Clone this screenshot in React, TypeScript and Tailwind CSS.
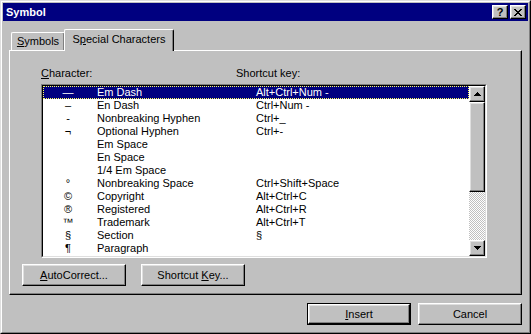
import React from "react";

const rows: [string, string, string][] = [
  ["—", "Em Dash", "Alt+Ctrl+Num -"],
  ["–", "En Dash", "Ctrl+Num -"],
  ["-", "Nonbreaking Hyphen", "Ctrl+_"],
  ["¬", "Optional Hyphen", "Ctrl+-"],
  ["", "Em Space", ""],
  ["", "En Space", ""],
  ["", "1/4 Em Space", ""],
  ["°", "Nonbreaking Space", "Ctrl+Shift+Space"],
  ["©", "Copyright", "Alt+Ctrl+C"],
  ["®", "Registered", "Alt+Ctrl+R"],
  ["™", "Trademark", "Alt+Ctrl+T"],
  ["§", "Section", "§"],
  ["¶", "Paragraph", ""],
];

const raised =
  "bg-[#c0c0c0] border border-t-white border-l-white border-r-black border-b-black shadow-[inset_-1px_-1px_0_#808080,inset_1px_1px_0_#dfdfdf]";

function Btn({ children, def }: { children: React.ReactNode; def?: boolean }) {
  if (def) {
    return (
      <div className="w-[104px] h-[22px] border border-black">
        <div className={`w-full h-full ${raised} flex items-center justify-center`}>{children}</div>
      </div>
    );
  }
  return (
    <div className={`w-[104px] h-[22px] ${raised} flex items-center justify-center`}>{children}</div>
  );
}

function Arrow({ up }: { up?: boolean }) {
  return (
    <svg width="7" height="4" viewBox="0 0 7 4">
      {up ? (
        <path d="M3 0h1v1h1v1h1v1h1v1H0V3h1V2h1V1h1z" fill="#000" />
      ) : (
        <path d="M0 0h7v1H6v1H5v1H4v1H3V3H2V2H1V1H0z" fill="#000" />
      )}
    </svg>
  );
}

export default function App() {
  return (
    <div className="w-[531px] h-[334px] bg-[#c0c0c0] border border-t-[#dfdfdf] border-l-[#dfdfdf] border-r-black border-b-black font-['Liberation_Sans',Arial,sans-serif] text-[11px] text-black leading-[13px] select-none">
      <div className="h-full border border-t-white border-l-white border-r-[#808080] border-b-[#808080] p-px flex flex-col">
        {/* title bar */}
        <div className="h-[18px] bg-[#000080] flex items-center pl-[3px] pr-[2px]">
          <span className="text-white font-bold text-[11px] flex-1">Symbol</span>
          <div className={`w-[16px] h-[14px] ${raised} flex items-center justify-center font-bold text-[11px] leading-none text-black`}>
            ?
          </div>
          <div className={`w-[16px] h-[14px] ml-[2px] ${raised} flex items-center justify-center`}>
            <svg width="8" height="7" viewBox="0 0 8 7">
              <path d="M0 0h2v1h1v1h2V1h1V0h2v1H7v1H6v1H5v1h1v1h1v1h1v1H6V6H5V5H3v1H2v1H0V6h1V5h1V4h1V3H2V2H1V1H0z" fill="#000" />
            </svg>
          </div>
        </div>

        {/* tabs + panel */}
        <div className="px-[6px] mt-[8px] flex flex-col">
          <div className="h-[21px] flex items-end pl-[2px]">
            <div className="w-[54px] h-[18px] border-t border-l border-t-white border-l-white border-r border-r-black shadow-[inset_-1px_0_0_#808080] rounded-tl-[2px] rounded-tr-[2px] flex items-center justify-center">
              <span>
                <span className="underline">S</span>ymbols
              </span>
            </div>
            <div className="relative z-10 -mb-px -ml-px w-[110px] h-[22px] bg-[#c0c0c0] border-t border-l border-t-white border-l-white border-r border-r-black shadow-[inset_-1px_0_0_#808080] rounded-tl-[2px] rounded-tr-[2px] flex items-center justify-center pb-[2px]">
              <span>
                S<span className="underline">p</span>ecial Characters
              </span>
            </div>
          </div>
          <div className="h-[245px] border border-t-white border-l-white border-r-black border-b-black shadow-[inset_-1px_-1px_0_#808080] flex flex-col">
            <div className="pt-[16px] pl-[31px] pr-[34px]">
              <div className="h-[13px] flex">
                <div className="w-[195px]">
                  <span className="underline">C</span>haracter:
                </div>
                <div>Shortcut key:</div>
              </div>
              <div className="mt-[4px] h-[174px] border border-t-[#808080] border-l-[#808080] border-r-white border-b-white">
                <div className="h-full border border-t-black border-l-black border-r-[#dfdfdf] border-b-[#dfdfdf] bg-white flex">
                  <div className="flex-1 flex flex-col">
                    {rows.map(([sym, name, key], i) => {
                      const sel = i === 0;
                      return (
                        <div
                          key={i}
                          className={
                            "h-[13px] flex whitespace-nowrap " +
                            (sel
                              ? "bg-[#000080] text-white outline outline-1 outline-dotted outline-[#ffff60] -outline-offset-1"
                              : "")
                          }
                        >
                          <div className="w-[50px] text-center">{sym}</div>
                          <div className="w-[163px] pl-[4px]">{name}</div>
                          <div>{key}</div>
                        </div>
                      );
                    })}
                  </div>
                  {/* scrollbar */}
                  <div className="w-[16px] flex flex-col">
                    <div className={`h-[16px] ${raised} flex items-center justify-center`}>
                      <Arrow up />
                    </div>
                    <div className={`h-[90px] ${raised}`} />
                    <div className="flex-1 bg-[image:repeating-conic-gradient(#c0c0c0_0_25%,#ffffff_0_50%)] bg-[length:2px_2px]" />
                    <div className={`h-[16px] ${raised} flex items-center justify-center`}>
                      <Arrow />
                    </div>
                  </div>
                </div>
              </div>
            </div>
            <div className="mt-[6px] pl-[12px] flex gap-[15px]">
              <Btn>
                <span>
                  <span className="underline">A</span>utoCorrect...
                </span>
              </Btn>
              <Btn>
                <span>
                  Shortcut <span className="underline">K</span>ey...
                </span>
              </Btn>
            </div>
          </div>
          <div className="mt-[8px] flex justify-end gap-[7px]">
            <Btn def>
              <span>
                <span className="underline">I</span>nsert
              </span>
            </Btn>
            <Btn>Cancel</Btn>
          </div>
        </div>
      </div>
    </div>
  );
}
